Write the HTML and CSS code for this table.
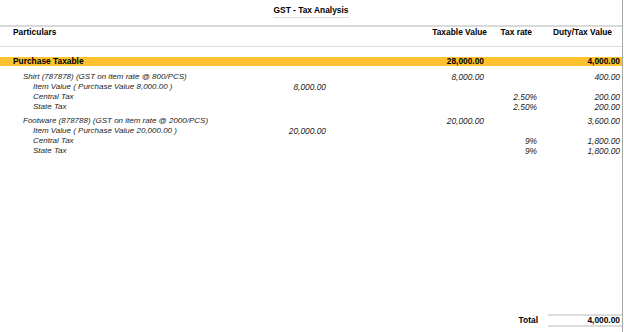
FILE: index.html
```html
<!DOCTYPE html>
<html>
<head>
<meta charset="utf-8">
<link rel="stylesheet" href="styles.css">
</head>
<body>
<div class="report">
  <div class="title-bar"><span class="title">GST - Tax Analysis</span></div>
  <div class="col-head">
    <div class="ch-part">Particulars</div>
    <div class="ch-num">Taxable Value</div>
    <div class="ch-num">Tax rate</div>
    <div class="ch-num ch-duty">Duty/Tax Value</div>
  </div>
  <div class="band row">
    <div class="lbl">Purchase Taxable</div>
    <div></div>
    <div class="num">28,000.00</div>
    <div></div>
    <div class="num">4,000.00</div>
  </div>
  <div class="group">
    <div class="row">
      <div class="lbl l1">Shirt (787878) (GST on item rate @ 800/PCS)</div>
      <div></div>
      <div class="num">8,000.00</div>
      <div></div>
      <div class="num">400.00</div>
    </div>
    <div class="row">
      <div class="lbl l2">Item Value ( Purchase Value 8,000.00 )</div>
      <div class="num">8,000.00</div>
      <div></div><div></div><div></div>
    </div>
    <div class="row">
      <div class="lbl l2">Central Tax</div>
      <div></div><div></div>
      <div class="num">2.50%</div>
      <div class="num">200.00</div>
    </div>
    <div class="row">
      <div class="lbl l2">State Tax</div>
      <div></div><div></div>
      <div class="num">2.50%</div>
      <div class="num">200.00</div>
    </div>
  </div>
  <div class="group">
    <div class="row">
      <div class="lbl l1">Footware (878788) (GST on item rate @ 2000/PCS)</div>
      <div></div>
      <div class="num">20,000.00</div>
      <div></div>
      <div class="num">3,600.00</div>
    </div>
    <div class="row">
      <div class="lbl l2">Item Value ( Purchase Value 20,000.00 )</div>
      <div class="num">20,000.00</div>
      <div></div><div></div><div></div>
    </div>
    <div class="row">
      <div class="lbl l2">Central Tax</div>
      <div></div><div></div>
      <div class="num">9%</div>
      <div class="num">1,800.00</div>
    </div>
    <div class="row">
      <div class="lbl l2">State Tax</div>
      <div></div><div></div>
      <div class="num">9%</div>
      <div class="num">1,800.00</div>
    </div>
  </div>
  <div class="footer">
    <span class="total-lbl">Total</span>
    <span class="total-val">4,000.00</span>
  </div>
</div>
</body>
</html>
```
FILE: styles.css
```css
html, body {
  margin: 0;
  padding: 0;
  background: #fff;
}
body {
  font-family: "Liberation Sans", Arial, sans-serif;
  font-size: 8.4px;
  color: #000;
}
.report {
  width: 622px;
  height: 332px;
  border-right: 1px solid #a6a6a6;
  display: flex;
  flex-direction: column;
}
.title-bar {
  text-align: center;
  padding-top: 5px;
  height: 20px;
  box-sizing: border-box;
  line-height: 10px;
}
.title {
  display: inline-block;
  font-weight: bold;
  padding: 0 1px 2px;
  border-bottom: 1px solid #dedede;
}
.col-head {
  display: grid;
  grid-template-columns: 1fr 70px 45px 90px;
  border-top: 2px solid #d9d9d9;
  border-bottom: 1px solid #dedede;
  margin-top: 5px;
  line-height: 10px;
  padding-bottom: 9px;
  font-weight: bold;
}
.ch-part {
  padding-left: 13px;
}
.ch-num {
  text-align: right;
}
.ch-duty {
  padding-right: 10px;
}
.row {
  display: grid;
  grid-template-columns: 280px 46px 158px 53px 1fr;
  line-height: 10px;
}
.row .num {
  text-align: right;
  white-space: nowrap;
}
.row > div:last-child {
  padding-right: 2px;
}
.band {
  margin-top: 10px;
  background: #fdc22d;
  font-weight: bold;
  line-height: 9px;
}
.band .lbl {
  padding-left: 13px;
}
.group {
  font-style: italic;
  color: #222;
  margin-top: 4px;
}
.group .lbl {
  font-size: 8px;
}
.band + .group {
  margin-top: 6px;
}
.lbl {
  white-space: nowrap;
}
.l1 {
  padding-left: 23px;
}
.l2 {
  padding-left: 33px;
}
.footer {
  margin-top: auto;
  margin-bottom: 5px;
  display: flex;
  justify-content: flex-end;
  align-items: center;
  line-height: 9px;
  font-weight: bold;
}
.total-lbl {
  margin-right: 10px;
}
.total-val {
  width: 74px;
  text-align: right;
  padding-right: 2px;
  box-sizing: border-box;
  border-top: 2px solid #dcdcdc;
  border-bottom: 2px solid #dcdcdc;
}
```
